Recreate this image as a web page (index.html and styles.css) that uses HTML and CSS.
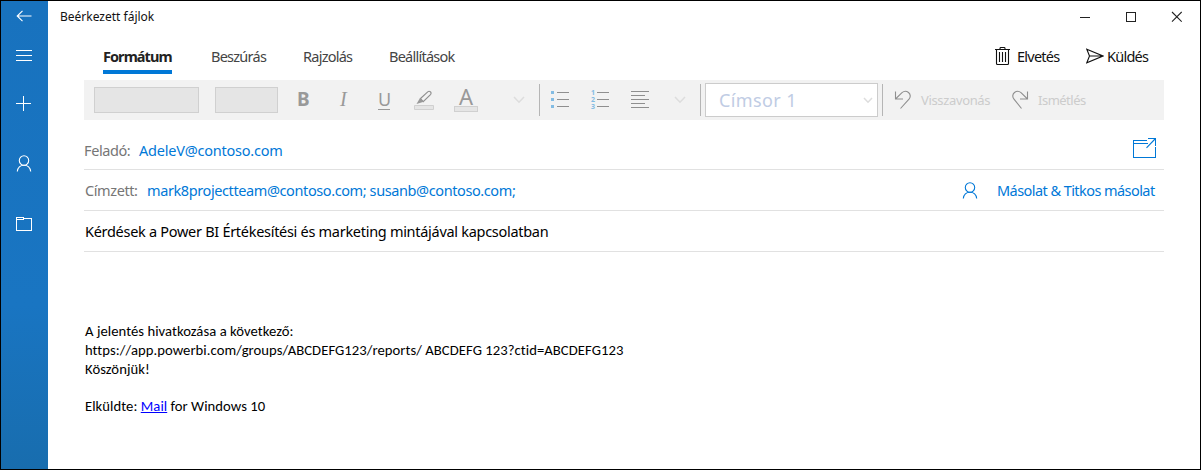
FILE: index.html
```html
<!DOCTYPE html>
<html lang="hu">
<head>
<meta charset="utf-8">
<title>Beérkezett fájlok</title>
<link rel="stylesheet" href="styles.css">
</head>
<body>
<div class="window">
  <nav class="rail">
    <svg class="rail-icon back" width="16" height="14" viewBox="0 0 16 14"><path d="M15.500 7H1.500M6.500 1.800L1.200 7l5.300 5.200"/></svg>
    <svg class="rail-icon menu" width="16" height="12" viewBox="0 0 16 12"><path class="crisp" d="M0 .5h16M0 5.500h16M0 10.500h16"/></svg>
    <svg class="rail-icon plus" width="15" height="15" viewBox="0 0 15 15"><path class="crisp" d="M0 7.500h15M7.500 0v15"/></svg>
    <svg class="rail-icon person" width="16" height="17" viewBox="0 0 16 17"><circle cx="8" cy="5.500" r="4.700"/><path d="M1.300 16.500C1.800 12.500 4.500 10.200 8 10.200s6.200 2.300 6.700 6.300"/></svg>
    <svg class="rail-icon folder" width="16" height="14" viewBox="0 0 16 14"><path class="crisp" d="M.5 13.500V.5h7v1h8v12zM.5 2.500h7v-1"/></svg>
  </nav>
  <main class="compose">
    <header class="titlebar">
      <span class="title">Beérkezett fájlok</span>
      <svg class="controls" width="102" height="12" viewBox="0 0 102 12"><path class="crisp" d="M0 6.500h10M46.500 1.500h9v9h-9z"/><path d="M92 1l9.700 9.700M101.700 1L92 10.700"/></svg>
    </header>
    <div class="tabs">
      <div class="tab active"><span class="t-format">Formátum</span></div>
      <div class="tab insert"><span>Beszúrás</span></div>
      <div class="tab draw"><span>Rajzolás</span></div>
      <div class="tab options"><span>Beállítások</span></div>
      <div class="actions">
        <svg class="trash" width="15" height="18" viewBox="0 0 15 18"><path d="M0 2.500h15M5 2.500V1.300Q5 .5 6 .5h3q1 0 1 .8v1.200M1.500 2.500v14q0 1 1 1h10q1 0 1-1v-14M4.500 5v10M7.500 5v10M10.500 5v10"/></svg>
        <span class="discard">Elvetés</span>
        <svg class="plane" width="18" height="16" viewBox="0 0 18 16"><path d="M.8 1.200L17 8 .8 14.700 3.500 8zM3.500 8H17"/></svg>
        <span class="send">Küldés</span>
      </div>
    </div>
    <div class="toolbar">
      <div class="box font-name"></div>
      <div class="box font-size"></div>
      <span class="bold">B</span>
      <span class="italic">I</span>
      <span class="under">U</span>
      <svg class="marker" width="20" height="20" viewBox="0 0 20 20"><path class="swatch" d="M.5 15.500h19v4H.5z"/><path class="line" d="M6.500 8.500L14 1.700q1-1 2.300 0t.4 2.600L9.200 11.600z"/><path class="tip" d="M6 8l3.700 3.700L2.500 14z"/></svg>
      <span class="color"><span class="letter">A</span><span class="bar"></span></span>
      <svg class="chev c1" width="12" height="8" viewBox="0 0 12 8"><path d="M1 1l5 5.200L11 1"/></svg>
      <i class="sep s1"></i>
      <svg class="list bullets" width="18" height="18" viewBox="0 0 18 18"><path class="dots" d="M0 0h3v3H0zM0 7h3v3H0zM0 14h3v3H0z"/><path class="line crisp" d="M6 1.500h12M6 8.500h12M6 15.500h12"/></svg>
      <svg class="list numbers" width="18" height="20" viewBox="0 0 18 20"><g class="nums"><text x="0" y="5">1</text><text x="0" y="12">2</text><text x="0" y="19">3</text></g><path class="line crisp" d="M6 2.500h12M6 9.500h12M6 16.500h12"/></svg>
      <svg class="list align" width="18" height="18" viewBox="0 0 18 18"><path class="line crisp" d="M0 .5h18M0 4.500h14M0 8.500h18M0 12.500h14M0 16.500h18"/></svg>
      <svg class="chev c2" width="12" height="8" viewBox="0 0 12 8"><path d="M1 1l5 5.200L11 1"/></svg>
      <i class="sep s2"></i>
      <div class="style-select"><span>Címsor 1</span><svg class="chev" width="10" height="7" viewBox="0 0 10 7"><path d="M1 1l4 4.200L9 1"/></svg></div>
      <i class="sep s3"></i>
      <svg class="undo" width="18" height="20" viewBox="0 0 18 20"><path class="line" d="M1.500 1.500v7.500h7.500M1.500 9L8 2.700C10 1 12.500 1 14.500 2.500s2.400 4.500.5 6.700L6.500 18.500"/></svg>
      <span class="t-undo">Visszavonás</span>
      <svg class="redo" width="18" height="20" viewBox="0 0 18 20"><path class="line" d="M16.500 1.500v7.500H9M16.500 9L10 2.700C8 1 5.500 1 3.500 2.500S1.100 7 3 9.200l7.500 9.300"/></svg>
      <span class="t-redo">Ismétlés</span>
    </div>
    <div class="field">
      <span class="label from">Feladó:</span><span class="address a-from">AdeleV@contoso.com</span>
      <svg class="popout" width="24" height="21" viewBox="0 0 24 21"><path class="crisp" d="M14 2.500H.5v17h21.500V9M.5 5.500H15M15 .5h7.500v7"/><path d="M22.500 .5L13.500 9.800"/></svg>
    </div>
    <div class="field">
      <span class="label to">Címzett:</span><span class="address a-to">mark8projectteam@contoso.com; susanb@contoso.com;</span>
      <svg class="contact" width="16" height="17" viewBox="0 0 16 17"><circle cx="8" cy="5.500" r="4.700"/><path d="M1.300 16.500C1.800 12.500 4.500 10.200 8 10.200s6.200 2.300 6.700 6.300"/></svg>
      <span class="address cc">Másolat &amp; Titkos másolat</span>
    </div>
    <div class="field"><span class="subject">Kérdések a Power BI Értékesítési és marketing mintájával kapcsolatban</span></div>
    <article class="message">
      <p><span class="m1">A jelentés hivatkozása a következő:</span></p>
      <p><span class="m2">https://app.powerbi.com/groups/ABCDEFG123/reports/ ABCDEFG 123?ctid=ABCDEFG123</span></p>
      <p><span class="m3">Köszönjük!</span></p>
      <p class="signature"><span class="m4">Elküldte: <a>Mail</a> for Windows 10</span></p>
    </article>
  </main>
</div>
</body>
</html>
```
FILE: styles.css
```css
* { box-sizing: border-box; }
body { margin: 0; font-family: "Noto Sans", "Open Sans", sans-serif; color: #222; }
svg { display: block; flex: none; fill: none; stroke: currentColor; stroke-width: 1.1; }
.crisp { shape-rendering: crispEdges; stroke-width: 1; }
.window { display: flex; width: 1201px; height: 470px; border: 1px solid #000; background: #fff; overflow: hidden; white-space: nowrap; }

.rail { width: 47px; flex: none; padding: 8px 0 0 15px; display: flex; flex-direction: column; color: #fff; background: linear-gradient(#1872be, #1975c2 65%, #186dae); }
.menu { margin-top: 27px; }
.plus { margin-top: 34px; }
.person { margin-top: 44px; }
.folder { margin-top: 45px; }

.compose { flex: 1; }
.titlebar { height: 31px; padding: 0 18px 0 12px; display: flex; align-items: center; justify-content: space-between; }
.title { font-size: 12px; color: #111; }

.tabs { height: 48px; padding: 11px 15px 0 55px; display: flex; align-items: flex-start; font-size: 14.500px; line-height: 26px; letter-spacing: -0.75px; color: #444; }
.active { width: 69px; height: 31px; border-bottom: 4px solid #0078d7; font-weight: 700; letter-spacing: -0.95px; color: #222; }
.insert { width: 92px; margin-left: 39px; }
.draw { width: 86px; }
.options { width: 80px; }
.actions { margin-left: auto; width: 190px; display: flex; color: #111; }
.trash { margin: 4px 7px 0 0; }
.discard { width: 69px; }
.plane { margin: 5px 3px 0 0; }

.toolbar { height: 40px; width: 1080px; margin-left: 36px; padding-left: 10px; background: #f2f2f2; display: flex; align-items: center; color: #999; }
.toolbar > * { flex: none; }
.box { height: 26px; background: #e5e5e5; border: 1px solid #d0d0d0; }
.font-name { width: 105px; }
.font-size { width: 63px; margin-left: 16px; }
.bold { width: 43px; margin: -2px 0 0 19px; font-size: 19px; font-weight: 700; }
.italic { width: 38px; margin-top: -2px; font: italic 20px "Liberation Serif", serif; }
.under { width: 12px; margin-top: -1px; font-size: 18px; line-height: 19px; border-bottom: 1px solid #999; text-align: center; }
.marker { margin: 0 0 0 24px; }
.swatch { fill: #e5e5e5; stroke: #d0d0d0; stroke-width: 1; }
.line { stroke: #8f8f8f; }
.tip { fill: #999; stroke: none; }
.color { width: 24px; margin: -1px 0 0 20px; display: flex; flex-direction: column; align-items: center; }
.letter { font-size: 22px; line-height: 19px; }
.bar { width: 24px; height: 6px; border: 1px solid #d0d0d0; background: #e5e5e5; }
.chev { color: #ddd; stroke-width: 1.500; }
.c1 { margin-left: 35px; }
.sep { width: 1px; height: 32px; background: #b5b5b5; }
.s1 { margin-left: 14px; }
.bullets { margin: -1px 0 0 11px; }
.numbers { margin: 0 0 0 22px; overflow: visible; }
.align { margin: -1px 0 0 22px; }
.dots { fill: #83bce3; stroke: none; }
.nums { fill: #83bce3; stroke: none; font: 700 7px "Open Sans", sans-serif; }
.c2 { margin-left: 25px; }
.s2 { margin-left: 14px; }
.style-select { width: 173px; height: 34px; margin-left: 4px; padding: 0 4px 0 13px; display: flex; align-items: center; justify-content: space-between; border: 1px solid #ccc; background: #fff; color: #c0cce4; font-size: 18px; letter-spacing: 0.4px; }
.s3 { margin-left: 4px; }
.undo { margin-left: 11px; }
.t-undo { width: 80px; margin-left: 9px; color: #ccc; font-size: 13px; letter-spacing: -0.35px; }
.redo { margin-left: 10px; }
.t-redo { margin-left: 9px; color: #ccc; font-size: 13px; letter-spacing: -0.5px; }

.field { height: 41px; width: 1080px; margin-left: 36px; border-bottom: 1px solid #e1e1e1; display: flex; align-items: center; font-size: 14.500px; color: #0078d7; }
.toolbar + .field { height: 50px; padding-top: 11px; }
.label { color: #767676; letter-spacing: -0.4px; }
.from { width: 55px; }
.to { width: 63px; padding-left: 1px; }
.a-from { letter-spacing: -0.22px; }
.a-to { letter-spacing: -0.4px; margin-top: -1px; }
.popout { margin: -4px 7px 0 auto; }
.contact { margin-left: auto; margin-right: 19px; }
.cc { width: 167px; letter-spacing: -0.56px; }
.subject { padding-left: 1px; color: #000; letter-spacing: -0.29px; }

.message { padding: 70px 0 0 37px; color: #000; font-family: Carlito, Lato, sans-serif; font-size: 14.670px; letter-spacing: 0.05px; }
.message p { margin: 0; height: 19px; line-height: 19px; }
.message .signature { margin-top: 18px; }
.message a { color: #00f; text-decoration: underline; }
```
